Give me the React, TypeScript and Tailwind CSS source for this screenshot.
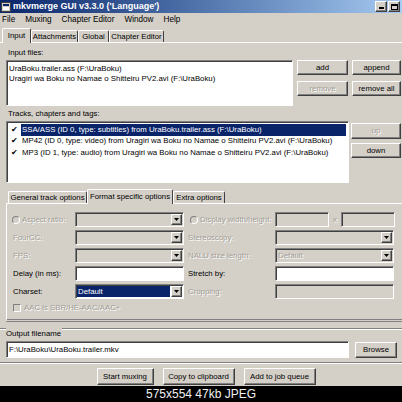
import type { ReactNode } from 'react'

const raised =
  'border border-t-white border-l-white border-r-[#404040] border-b-[#404040] shadow-[inset_-1px_-1px_0_#808080]'
const sunken =
  'border border-t-[#808080] border-l-[#808080] border-r-white border-b-white shadow-[inset_1px_1px_0_#404040]'
const dim = 'text-[#a19d95] [text-shadow:1px_1px_0_#fff]'

function Btn({ children, className = '', disabled = false }: { children: ReactNode; className?: string; disabled?: boolean }) {
  return (
    <div className={`${raised} bg-[#d4d0c8] flex items-center justify-center text-[7.8px] ${disabled ? dim : ''} ${className}`}>
      {children}
    </div>
  )
}

function Arrow() {
  return (
    <div className={`${raised} bg-[#d4d0c8] w-[11px] h-full flex items-center justify-center shrink-0`}>
      <svg width="5" height="3" viewBox="0 0 5 3">
        <path d="M0 0h5L2.5 3z" fill="#000" />
      </svg>
    </div>
  )
}

function Combo({ className = '', white = false, children }: { className?: string; white?: boolean; children?: ReactNode }) {
  return (
    <div className={`${sunken} ${white ? 'bg-white' : 'bg-[#d4d0c8]'} h-[15px] flex items-stretch p-[1px] ${className}`}>
      <div className="flex-1 flex items-center min-w-0">{children}</div>
      <Arrow />
    </div>
  )
}

function Field({ className = '', white = false }: { className?: string; white?: boolean }) {
  return <div className={`${sunken} ${white ? 'bg-white' : 'bg-[#d4d0c8]'} h-[15px] ${className}`} />
}

function Radio() {
  return <div className="w-[8px] h-[8px] rounded-full border border-t-[#808080] border-l-[#808080] border-r-white border-b-white bg-[#d4d0c8] shrink-0" />
}

function Tab({ label, w, active = false }: { label: string; w: string; active?: boolean }) {
  return (
    <div
      className={`${w} ${active ? 'h-[15px] -mb-px bg-[#d4d0c8] z-10' : 'h-[12px]'} border-t border-l border-t-white border-l-white border-r border-r-[#404040] rounded-t-[2px] flex items-center justify-center whitespace-nowrap`}
    >
      {label}
    </div>
  )
}

export default function App() {
  return (
    <div className="w-[402px] h-[402px] overflow-hidden bg-[#d4d0c8] text-black font-['Liberation_Sans',Arial,sans-serif] text-[8px] leading-none flex flex-col">
      {/* title bar */}
      <div className="h-[13px] shrink-0 bg-gradient-to-r from-[#0a246a] to-[#a6caf0] flex items-center">
        <svg width="10" height="10" viewBox="0 0 10 10" className="ml-[1px]">
          <rect x="0.5" y="0.5" width="9" height="9" fill="#d4d0c8" stroke="#404040" />
          <rect x="2" y="2" width="6" height="2" fill="#0a246a" />
          <rect x="2" y="5" width="6" height="3" fill="#fff" />
        </svg>
        <span className="ml-[2px] text-white font-bold text-[9px] whitespace-nowrap">mkvmerge GUI v3.3.0 ('Language')</span>
        <div className="ml-auto flex gap-[1px] mr-[2px]">
          <div className={`${raised} bg-[#d4d0c8] w-[12px] h-[11px] flex items-end justify-center pb-[2px]`}>
            <div className="w-[5px] h-[2px] bg-black" />
          </div>
          <div className={`${raised} bg-[#d4d0c8] w-[12px] h-[11px] flex items-center justify-center`}>
            <div className="w-[7px] h-[6px] border border-black border-t-2" />
          </div>
        </div>
      </div>

      {/* menu */}
      <div className="h-[14px] shrink-0 flex items-center gap-[10px] pl-[2px] text-[8.2px]">
        <span>File</span>
        <span>Muxing</span>
        <span>Chapter Editor</span>
        <span>Window</span>
        <span>Help</span>
      </div>

      {/* main tabs */}
      <div className="h-[16px] shrink-0 flex items-end pl-[2px] border-b border-white text-[7.8px]">
        <Tab label="Input" w="w-[29px]" active />
        <Tab label="Attachments" w="w-[47px]" />
        <Tab label="Global" w="w-[31px]" />
        <Tab label="Chapter Editor" w="w-[55px]" />
      </div>

      <div className="flex-1 flex flex-col pl-[6px] text-[7.8px]">
        <div className="h-[17px] flex items-center pt-[3px] pl-[2px]">Input files:</div>
        <div className="h-[46px] flex">
          <div className={`${sunken} bg-white w-[287px] h-full flex flex-col pt-[3px] pl-[2px] leading-[10px] whitespace-nowrap overflow-hidden`}>
            <span>UraBoku.trailer.ass (F:\UraBoku)</span>
            <span>Uragiri wa Boku no Namae o Shitteiru PV2.avi (F:\UraBoku)</span>
          </div>
          <div className="ml-[4px] grid grid-cols-[51px_49px] grid-rows-[15px_15px] gap-x-[4px] gap-y-[6px]">
            <Btn>add</Btn>
            <Btn>append</Btn>
            <Btn disabled>remove</Btn>
            <Btn>remove all</Btn>
          </div>
        </div>

        <div className="h-[15px] flex items-center pl-[2px]">Tracks, chapters and tags:</div>
        <div className="h-[62px] flex">
          <div className={`${sunken} bg-white w-[343px] h-full flex flex-col pt-[2px] pl-[2px] pr-[2px] whitespace-nowrap overflow-hidden`}>
            {[
              'SSA/ASS (ID 0, type: subtitles) from UraBoku.trailer.ass (F:\\UraBoku)',
              'MP42 (ID 0, type: video) from Uragiri wa Boku no Namae o Shitteiru PV2.avi (F:\\UraBoku)',
              'MP3 (ID 1, type: audio) from Uragiri wa Boku no Namae o Shitteiru PV2.avi (F:\\UraBoku)',
            ].map((t, i) => (
              <div key={t} className="flex items-center h-[11.5px]">
                <span className="w-[12px] pl-[2px] text-[8px]">✔</span>
                <span className={`flex-1 h-full flex items-center pl-[1px] ${i === 0 ? 'bg-[#0a246a] text-white' : ''}`}>{t}</span>
              </div>
            ))}
          </div>
          <div className="ml-[2px] w-[50px] flex flex-col">
            <Btn disabled className="mt-[2px] h-[16px]">up</Btn>
            <Btn className="mt-[4px] h-[15px]">down</Btn>
          </div>
        </div>

        {/* inner tabs */}
        <div className="h-[21px] shrink-0 flex items-end pl-[2px] border-b border-white">
          <Tab label="General track options" w="w-[79px]" />
          <Tab label="Format specific options" w="w-[86px]" active />
          <Tab label="Extra options" w="w-[52px]" />
        </div>

        <div className="h-[118px] border-l border-white border-b-[3px] border-double border-b-[#808080] flex flex-col pl-[5px] pt-[7px]">
          <div className="flex flex-col gap-[1px]">
            <div className="h-[17px] flex items-center">
              <div className={`w-[63px] flex items-center gap-[2px] ${dim}`}>
                <Radio />
                <span>Aspect ratio:</span>
              </div>
              <Combo className="w-[109px]" />
              <div className={`w-[91px] flex items-center gap-[2px] pl-[6px] ${dim}`}>
                <Radio />
                <span>Display width/height:</span>
              </div>
              <Field className="w-[54px]" />
              <span className={`w-[12px] text-center ${dim}`}>x</span>
              <Field className="w-[54px]" />
            </div>
            <div className="h-[17px] flex items-center">
              <span className={`w-[63px] pl-[1px] ${dim}`}>FourCC:</span>
              <Combo className="w-[109px]" />
              <span className={`w-[91px] pl-[4px] ${dim}`}>Stereoscopy:</span>
              <Combo className="w-[119px]" />
            </div>
            <div className="h-[17px] flex items-center">
              <span className={`w-[63px] pl-[1px] ${dim}`}>FPS:</span>
              <Combo className="w-[109px]" />
              <span className={`w-[91px] pl-[4px] ${dim}`}>NALU size length:</span>
              <Combo className="w-[119px]">
                <span className={`pl-[1px] ${dim}`}>Default</span>
              </Combo>
            </div>
            <div className="h-[17px] flex items-center">
              <span className="w-[63px] pl-[1px]">Delay (in ms):</span>
              <Field white className="w-[109px]" />
              <span className="w-[91px] pl-[4px]">Stretch by:</span>
              <Field white className="w-[119px]" />
            </div>
            <div className="h-[17px] flex items-center">
              <span className="w-[63px] pl-[1px]">Charset:</span>
              <Combo white className="w-[109px]">
                <span className="h-full w-full mr-[1px] bg-[#0a246a] text-white flex items-center pl-[1px]">Default</span>
              </Combo>
              <span className={`w-[91px] pl-[4px] ${dim}`}>Cropping:</span>
              <Field className="w-[119px]" />
            </div>
          </div>
          <div className={`mt-[4px] flex items-center gap-[3px] pl-[1px] ${dim}`}>
            <div className="w-[8px] h-[8px] border border-t-[#808080] border-l-[#808080] border-r-white border-b-white bg-[#d4d0c8]" />
            <span>AAC is SBR/HE-AAC/AAC+</span>
          </div>
        </div>

        {/* output */}
        <div className="h-[19px] flex -ml-[6px]">
          <div className="w-[6px] h-[2px] mt-[6px] border-t border-[#808080] border-b border-b-white" />
          <span className="pt-[8px]">Output filename</span>
          <div className="flex-1 h-[2px] mt-[6px] ml-[1px] border-t border-[#808080] border-b border-b-white" />
        </div>
        <div className="h-[18px] flex items-start">
          <div className={`${sunken} bg-white w-[343px] h-[17px] flex items-center pl-[2px]`}>F:\UraBoku\UraBoku.trailer.mkv</div>
          <Btn className="ml-[6px] mt-[1px] w-[42px] h-[16px]">Browse</Btn>
        </div>
        <div className="h-[9px] -ml-[6px] pt-[3px]">
          <div className="h-[2px] border-t border-[#808080] border-b border-b-white" />
        </div>
        <div className="h-[17px] flex justify-center gap-[9px] -ml-[6px] pl-[10px]">
          <Btn className="w-[57px] h-[17px]">Start muxing</Btn>
          <Btn className="w-[72px] h-[17px]">Copy to clipboard</Btn>
          <Btn className="w-[72px] h-[17px]">Add to job queue</Btn>
        </div>
      </div>

      {/* image info bar */}
      <div className="h-[16px] shrink-0 bg-black text-[#f0f0f0] text-[12px] flex items-center justify-center">
        575x554 47kb JPEG
      </div>
    </div>
  )
}
